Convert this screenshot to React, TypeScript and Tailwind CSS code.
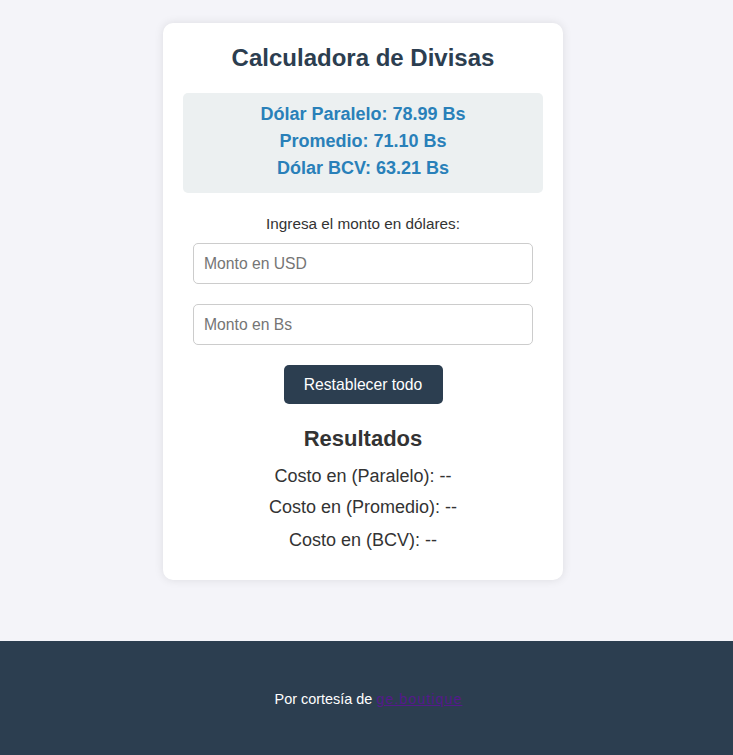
import React from "react";

export default function App() {
  return (
    <div
      className="min-h-[755px] flex flex-col bg-[#f4f4f9] text-[#333]"
      style={{ fontFamily: '"Liberation Sans", Arial, sans-serif' }}
    >
      <main className="flex-1 flex justify-center pt-[23px] pr-[7px]">
        <div className="w-[400px] h-[557px] bg-white rounded-[10px] shadow-[0_0_10px_rgba(0,0,0,0.1)] p-5 flex flex-col items-center text-center">
          <h1 className="text-[24px] font-bold text-[#2c3e50] mt-[1px] leading-[28px]">
            Calculadora de Divisas
          </h1>
          <div className="w-full h-[100px] mt-[21px] bg-[#ecf0f1] rounded-[5px] pt-[8px] text-[#2980b9] font-bold text-[18px] leading-[27px]">
            <p>Dólar Paralelo: 78.99 Bs</p>
            <p>Promedio: 71.10 Bs</p>
            <p>Dólar BCV: 63.21 Bs</p>
          </div>
          <label className="mt-[21px] text-[15.3px] leading-[20px] text-[#333]">
            Ingresa el monto en dólares:
          </label>
          <input
            className="mt-[9px] w-[340px] h-[41px] border border-[#ccc] rounded-[5px] px-[10px] text-[15.7px] placeholder:text-[#757575] outline-none"
            placeholder="Monto en USD"
          />
          <input
            className="mt-[20px] w-[340px] h-[41px] border border-[#ccc] rounded-[5px] px-[10px] text-[15.7px] placeholder:text-[#757575] outline-none"
            placeholder="Monto en Bs"
          />
          <button className="mt-[20px] w-[159px] h-[39px] bg-[#2c3e50] text-white rounded-[5px] text-[15.7px]">
            Restablecer todo
          </button>
          <h2 className="mt-[22px] text-[22px] font-bold leading-[26px] text-[#333]">
            Resultados
          </h2>
          <div className="mt-[14px] text-[18px] leading-[21px] flex flex-col gap-[11px] text-[#333]">
            <p>Costo en (Paralelo): --</p>
            <p className="mt-[-1px]">Costo en (Promedio): --</p>
            <p className="mt-[1px]">Costo en (BCV): --</p>
          </div>
        </div>
      </main>
      <footer className="h-[114px] bg-[#2c3e50] flex items-center justify-center text-white text-[14.4px] pl-[4px] pt-[4px]">
        <p>
          Por cortesía de{" "}
          <a href="#" className="text-[#551a8b] underline tracking-[1px]">
            ge.boutique
          </a>
        </p>
      </footer>
    </div>
  );
}
